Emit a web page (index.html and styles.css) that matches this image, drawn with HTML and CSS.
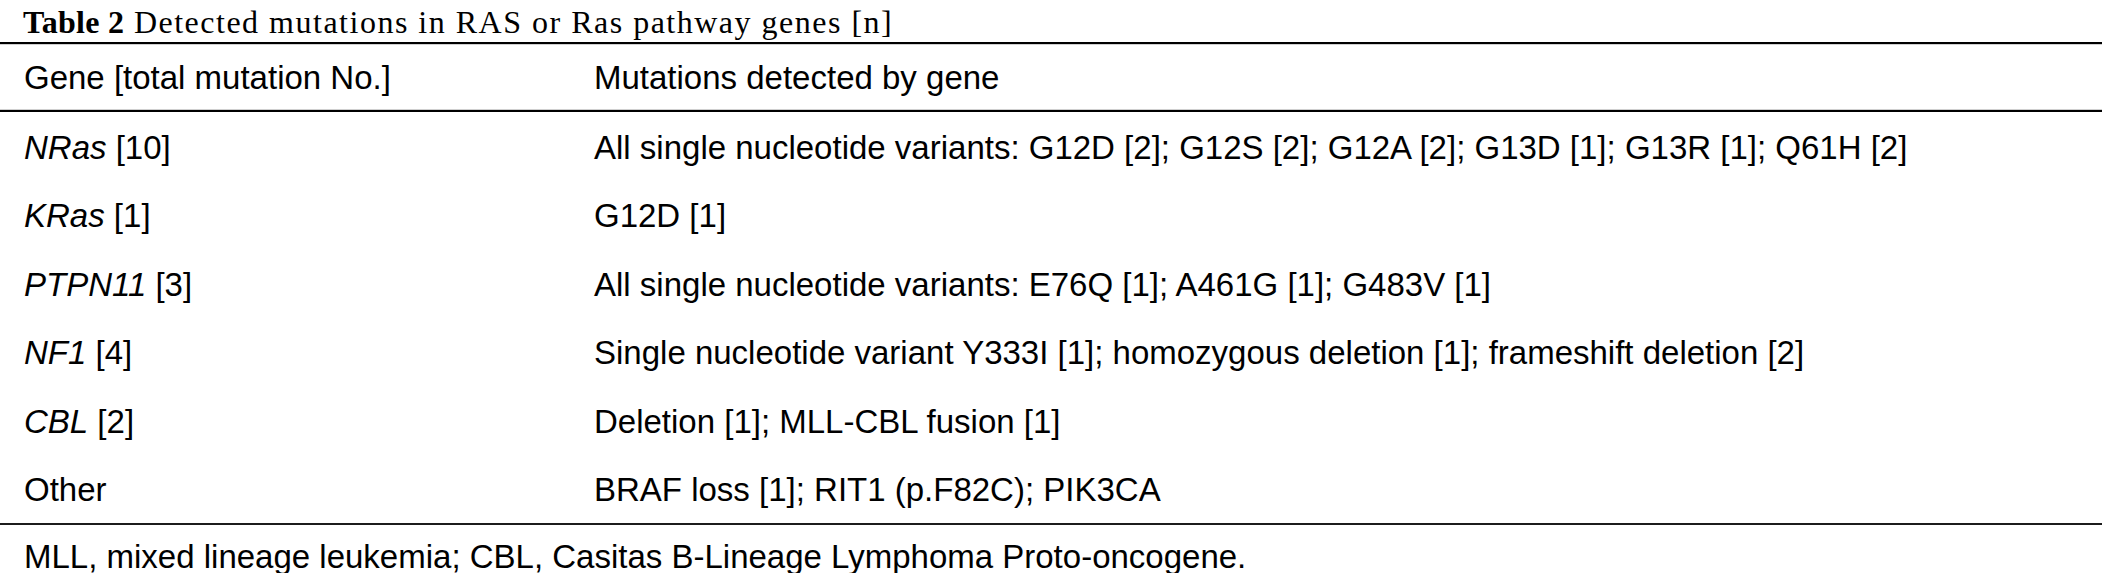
FILE: index.html
```html
<!DOCTYPE html>
<html lang="en">
<head>
<meta charset="utf-8">
<title>Table 2</title>
<link rel="stylesheet" href="styles.css">
</head>
<body>
<div class="caption"><span class="label">Table 2</span> Detected mutations in RAS or Ras pathway genes [n]</div>
<div class="table">
  <div class="thead">
    <div class="row head">
      <div class="cell c1">Gene [total mutation No.]</div>
      <div class="cell c2">Mutations detected by gene</div>
    </div>
  </div>
  <div class="tbody">
    <div class="row">
      <div class="cell c1"><i>NRas</i> [10]</div>
      <div class="cell c2">All single nucleotide variants: G12D [2]; G12S [2]; G12A [2]; G13D [1]; G13R [1]; Q61H [2]</div>
    </div>
    <div class="row">
      <div class="cell c1"><i>KRas</i> [1]</div>
      <div class="cell c2">G12D [1]</div>
    </div>
    <div class="row">
      <div class="cell c1"><i>PTPN11</i> [3]</div>
      <div class="cell c2">All single nucleotide variants: E76Q [1]; A461G [1]; G483V [1]</div>
    </div>
    <div class="row">
      <div class="cell c1"><i>NF1</i> [4]</div>
      <div class="cell c2">Single nucleotide variant Y333I [1]; homozygous deletion [1]; frameshift deletion [2]</div>
    </div>
    <div class="row">
      <div class="cell c1"><i>CBL</i> [2]</div>
      <div class="cell c2">Deletion [1]; MLL-CBL fusion [1]</div>
    </div>
    <div class="row">
      <div class="cell c1">Other</div>
      <div class="cell c2">BRAF loss [1]; RIT1 (p.F82C); PIK3CA</div>
    </div>
  </div>
</div>
<div class="footnote">MLL, mixed lineage leukemia; CBL, Casitas B-Lineage Lymphoma Proto-oncogene.</div>
</body>
</html>
```
FILE: styles.css
```css
html, body {
  margin: 0;
  padding: 0;
  background: #fff;
  color: #000;
}
body {
  width: 2102px;
  font-family: "Liberation Sans", Arial, Helvetica, sans-serif;
  font-size: 33px;
}
.caption {
  height: 42px;
  box-sizing: border-box;
  padding: 2px 0 0 23px;
  font-family: "Liberation Serif", "Times New Roman", serif;
  font-size: 32px;
  letter-spacing: 1.5px;
  line-height: 40px;
  white-space: nowrap;
  overflow: hidden;
}
.caption .label {
  font-weight: bold;
  letter-spacing: 0.3px;
}
.table {
  border-top: 2px solid #000;
  border-bottom: 2px solid #1c1c1c;
}
.thead {
  border-top: 1px solid #cfcfcf;
  border-bottom: 2px solid #000;
}
.thead .row {
  height: 65px;
  padding-top: 1px;
  border-bottom: 1px solid #cfcfcf;
}
.row {
  display: grid;
  grid-template-columns: 570px 1fr;
  align-items: center;
  box-sizing: border-box;
  padding-left: 24px;
  padding-top: 3px;
  height: 68.5px;
  white-space: nowrap;
}
.cell i {
  font-style: italic;
}
.footnote {
  padding: 13px 0 0 24px;
  line-height: 38px;
  white-space: nowrap;
}
```
